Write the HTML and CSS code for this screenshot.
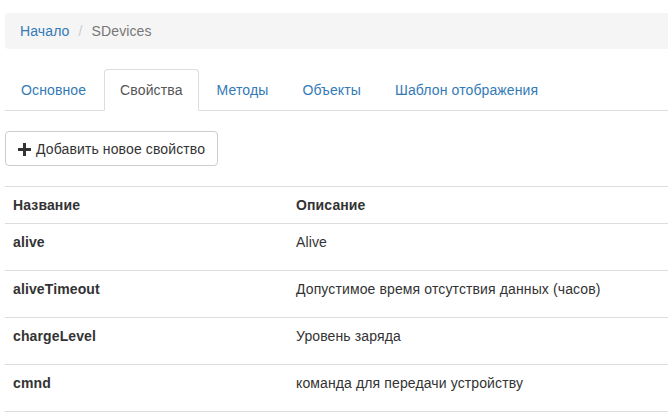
FILE: index.html
```html
<!DOCTYPE html>
<html>
<head>
<meta charset="utf-8">
<link rel="stylesheet" href="styles.css">
</head>
<body>
<div class="page">
  <ol class="breadcrumb">
    <li><a href="#">Начало</a></li>
    <li class="sep">/</li>
    <li class="active">SDevices</li>
  </ol>
  <ul class="tabs">
    <li><a href="#">Основное</a></li>
    <li class="active"><a href="#">Свойства</a></li>
    <li><a href="#">Методы</a></li>
    <li><a href="#">Объекты</a></li>
    <li><a href="#">Шаблон отображения</a></li>
  </ul>
  <div class="toolbar">
    <button class="btn"><svg class="plus" width="13" height="13" viewBox="0 0 13 13"><path d="M5 0h3v5h5v3H8v5H5V8H0V5h5z" fill="#333"/></svg>Добавить новое свойство</button>
  </div>
  <table class="props">
    <thead>
      <tr><th class="c1">Название</th><th>Описание</th></tr>
    </thead>
    <tbody>
      <tr><td class="c1"><b>alive</b></td><td>Alive</td></tr>
      <tr><td class="c1"><b>aliveTimeout</b></td><td>Допустимое время отсутствия данных (часов)</td></tr>
      <tr><td class="c1"><b>chargeLevel</b></td><td>Уровень заряда</td></tr>
      <tr><td class="c1"><b>cmnd</b></td><td>команда для передачи устройству</td></tr>
    </tbody>
  </table>
</div>
</body>
</html>
```
FILE: styles.css
```css
html, body { margin: 0; padding: 0; overflow: hidden; background: #fff; }
body {
  font-family: "Liberation Sans", Arial, sans-serif;
  font-size: 14px;
  line-height: 20px;
  color: #333;
  letter-spacing: 0.12px;
}
.page { width: 663px; padding: 13px 0 0 5px; overflow: hidden; }
.page > * { min-width: 0; }
a { color: #337ab7; text-decoration: none; }
.breadcrumb {
  list-style: none;
  margin: 0 -10px 20px 0;
  padding: 8px 15px;
  background: #f5f5f5;
  border-radius: 4px 0 0 4px;
  display: flex;
  height: 20px;
}
.breadcrumb .sep { color: #ccc; padding: 0 9px 0 9px; }
.breadcrumb .active { color: #777; }
.tabs {
  list-style: none;
  margin: 0;
  padding: 0;
  display: flex;
  border-bottom: 1px solid #ddd;
}
.tabs li { margin: 0 2px -1px 0; }
.tabs a {
  display: block;
  padding: 10px 15px;
  border: 1px solid transparent;
  border-radius: 4px 4px 0 0;
}
.tabs .active a {
  color: #555;
  background: #fff;
  border-color: #ddd #ddd transparent #ddd;
}
.toolbar { padding-top: 20px; display: flex; }
.btn {
  font-family: inherit;
  font-size: 14px;
  line-height: 20px;
  letter-spacing: 0.12px;
  color: #333;
  background: #fff;
  border: 1px solid #ccc;
  border-radius: 4px;
  padding: 7px 12px 6px 12px;
  display: flex;
  align-items: center;
  cursor: pointer;
}
.plus { margin-right: 5px; }
.props {
  margin-top: 20px;
  width: 100%;
  border-collapse: collapse;
}
.props th, .props td {
  text-align: left;
  vertical-align: top;
  padding: 8px;
  border-top: 1px solid #ddd;
}
.props th { font-weight: bold; border-bottom: 1px solid #ddd; }
.props td { height: 30px; }
.props tbody tr:last-child td { border-bottom: 1px solid #ddd; }
.props .c1 { width: 267px; }
```
